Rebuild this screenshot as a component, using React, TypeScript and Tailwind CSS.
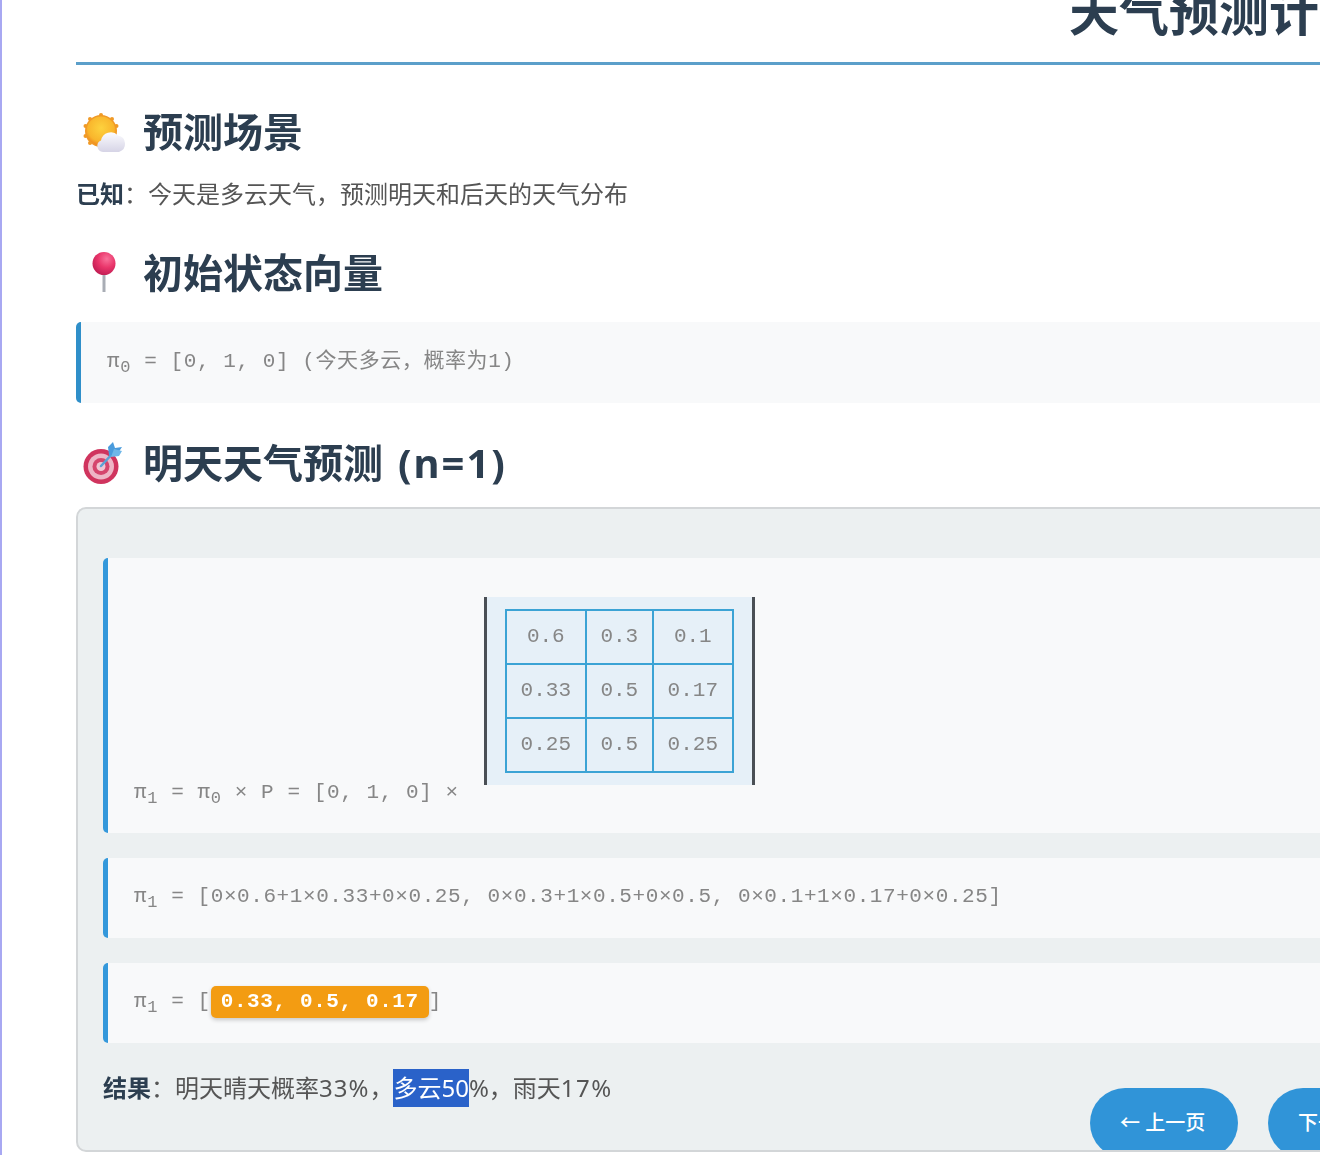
const sans = "font-['Noto_Sans','Noto_Sans_CJK_SC',sans-serif]"
const mono = "font-['Liberation_Mono','Noto_Sans_CJK_SC',monospace]"

const matrix = [
  ["0.6", "0.3", "0.1"],
  ["0.33", "0.5", "0.17"],
  ["0.25", "0.5", "0.25"],
]

function SunIcon() {
  return (
    <svg width="46" height="40" viewBox="0 0 46 40" className="shrink-0">
      <defs>
        <radialGradient id="sun" cx="50%" cy="40%" r="60%">
          <stop offset="0%" stopColor="#fdd23e" />
          <stop offset="75%" stopColor="#f9b52c" />
          <stop offset="100%" stopColor="#ee8a1f" />
        </radialGradient>
        <linearGradient id="cloud" x1="0" y1="0" x2="0" y2="1">
          <stop offset="0%" stopColor="#fbfbfe" />
          <stop offset="100%" stopColor="#d6d4e6" />
        </linearGradient>
      </defs>
      <g fill="#f09a27">
        <circle cx="20" cy="3" r="2" />
        <circle cx="9" cy="7" r="2" />
        <circle cx="31" cy="7" r="2" />
        <circle cx="4.500" cy="14" r="2" />
        <circle cx="35.500" cy="14" r="2" />
        <circle cx="4.500" cy="24" r="2" />
        <circle cx="9" cy="31" r="2" />
      </g>
      <circle cx="20" cy="19" r="16" fill="#f09a27" />
      <circle cx="20" cy="19" r="14.500" fill="url(#sun)" />
      <path d="M22 40a6 6 0 0 1-2-11.500a10 10 0 0 1 17-5a8.500 8.500 0 0 1 1 16.500z" fill="url(#cloud)" />
    </svg>
  )
}

function PinIcon() {
  return (
    <svg width="42" height="42" viewBox="0 0 42 42" className="shrink-0">
      <defs>
        <radialGradient id="pin" cx="62%" cy="30%" r="70%">
          <stop offset="0%" stopColor="#f9719a" />
          <stop offset="55%" stopColor="#e9356a" />
          <stop offset="100%" stopColor="#c41f55" />
        </radialGradient>
      </defs>
      <rect x="21.500" y="20" width="3" height="20" fill="#a9adb5" />
      <circle cx="23" cy="11.500" r="11.500" fill="url(#pin)" />
    </svg>
  )
}

function TargetIcon() {
  return (
    <svg width="44" height="44" viewBox="0 0 44 44" className="shrink-0">
      <circle cx="20" cy="25.500" r="17.500" fill="#d0345e" />
      <circle cx="20" cy="25.500" r="13" fill="#eeb5c6" />
      <circle cx="20" cy="25.500" r="8.500" fill="#d5456d" />
      <circle cx="20" cy="25.500" r="4.500" fill="#f0c5d2" />
      <path d="M20 25L33 11" stroke="#5aa2d6" strokeWidth="2.500" strokeLinecap="round" />
      <path d="M28 14l-1-8 5-5 2 6 7-1-4 6-9 3z" fill="#4a9bdc" />
      <path d="M30 16l3-8 8 2-3 5z" fill="#6fb7e8" />
    </svg>
  )
}

function SectionTitle({ icon, children }: { icon: React.ReactNode; children: React.ReactNode }) {
  return (
    <h2 className="flex h-[56px] items-center text-[40px] font-bold whitespace-nowrap text-[#2c3e50]">
      <span className="ml-[5px] flex w-[62px] items-center">{icon}</span>
      {children}
    </h2>
  )
}

function Pi({ n }: { n: number }) {
  return (
    <>
      π<sub className="relative top-[5px] align-baseline text-[17px]">{n}</sub>
    </>
  )
}

function FormulaBox({ children }: { children: React.ReactNode }) {
  return (
    <div className={`flex h-[80px] items-center rounded-[5px] border-l-[5px] border-[#3498db] bg-[#f8f9fa] pb-[2px] pl-[26px] text-[21px] leading-[28px] text-[#868686] ${mono}`}>
      <span className="whitespace-nowrap tracking-[0.58px]">{children}</span>
    </div>
  )
}

export default function App() {
  return (
    <div className={`h-[1155px] w-[1320px] overflow-hidden border-l-2 border-[#a8a8f2] bg-white pl-[74px] ${sans}`}>
      <div className="w-[1400px] blur-[0.6px]">
        {/* Page title, cut off by the top of the window */}
        <header className="flex h-[65px] items-end overflow-hidden border-b-[3px] border-[#5b9fca] pb-[20px] pl-[993px]">
          <h1 className="whitespace-nowrap text-[50px] leading-[60px] font-bold text-[#2c3e50]">天气预测计算</h1>
        </header>

        <div className="mt-[39px]">
          <SectionTitle icon={<SunIcon />}>预测场景</SectionTitle>
        </div>
        <p className="mt-[16px] h-[36px] text-[24px] leading-[36px] text-[#555]">
          <strong className="font-bold text-[#2c3e50]">已知</strong>：今天是多云天气，预测明天和后天的天气分布
        </p>

        <div className="mt-[33px]">
          <SectionTitle icon={<PinIcon />}>初始状态向量</SectionTitle>
        </div>

        <div className={`mt-[21px] flex h-[81px] items-center rounded-[5px] border-l-[5px] border-[#2f8fc9] bg-[#f8f9fa] pb-[2px] pl-[26px] text-[21px] leading-[28px] text-[#868686] ${mono}`}>
          <span className="whitespace-nowrap tracking-[0.58px]">
            <Pi n={0} /> = [0, 1, 0] (今天多云，概率为1)
          </span>
        </div>

        <div className="mt-[32px]">
          <SectionTitle icon={<TargetIcon />}>
            明天天气预测<span className="ml-[15px] tracking-[2px]">(n=1)</span>
          </SectionTitle>
        </div>

        {/* Worked example panel */}
        <div className="relative mt-[16px] h-[645px] overflow-hidden rounded-[10px] border-2 border-[#d3d6d8] bg-[#ecf0f1] pt-[49px] pl-[25px]">
          <div className={`flex h-[275px] items-end rounded-[5px] border-l-[5px] border-[#3498db] bg-[#f8f9fa] pb-[26px] pl-[26px] text-[21px] leading-[28px] text-[#868686] ${mono}`}>
            <span className="whitespace-nowrap tracking-[0.58px]">
              <Pi n={1} /> = <Pi n={0} /> × P = [0, 1, 0] ×
            </span>
            <div className="mb-[22px] ml-[25px] border-x-[3px] border-[#4a4f55] bg-[#e6f0f8] px-[18px] py-[12px]">
              <table className="border-collapse border-2 border-[#3ba3d5] text-center">
                <tbody>
                  {matrix.map((row, i) => (
                    <tr key={i} className="h-[54px]">
                      {row.map((cell, j) => (
                        <td key={j} className={`border-2 border-[#3ba3d5] p-0 ${j === 1 ? "w-[67px]" : "w-[80px]"}`}>
                          {cell}
                        </td>
                      ))}
                    </tr>
                  ))}
                </tbody>
              </table>
            </div>
          </div>

          <div className="mt-[25px]">
            <FormulaBox>
              <Pi n={1} /> = [0×0.6+1×0.33+0×0.25, 0×0.3+1×0.5+0×0.5, 0×0.1+1×0.17+0×0.25]
            </FormulaBox>
          </div>

          <div className="mt-[25px]">
            <FormulaBox>
              <Pi n={1} /> = [<span className="inline-block rounded-[5px] bg-[#f39c12] px-[10px] py-[2px] font-bold tracking-[0.6px] text-white shadow-[0_2px_4px_rgba(0,0,0,0.2)]">0.33, 0.5, 0.17</span>]
            </FormulaBox>
          </div>

          <p className="mt-[26px] text-[24px] leading-[38px] text-[#555]">
            <strong className="font-bold text-[#2c3e50]">结果</strong>：明天晴天概率<span className="tracking-[1px]">33%</span>，<span className="inline-block bg-[#2a62c9] text-white">多云50</span>%，雨天<span className="tracking-[1.5px]">17%</span>
          </p>

          {/* Page navigation floats over the panel and is clipped by it */}
          <div className="absolute top-[579px] left-[1012px] flex gap-[30px]">
            <button className="h-[70px] w-[148px] rounded-[35px] bg-[#3094d8] pl-[30px] text-left text-[20px] font-medium whitespace-nowrap text-white">← 上一页</button>
            <button className="h-[70px] w-[170px] rounded-[35px] bg-[#3094d8] pl-[30px] text-left text-[20px] font-medium whitespace-nowrap text-white">下一页 →</button>
          </div>
        </div>
      </div>
    </div>
  )
}
